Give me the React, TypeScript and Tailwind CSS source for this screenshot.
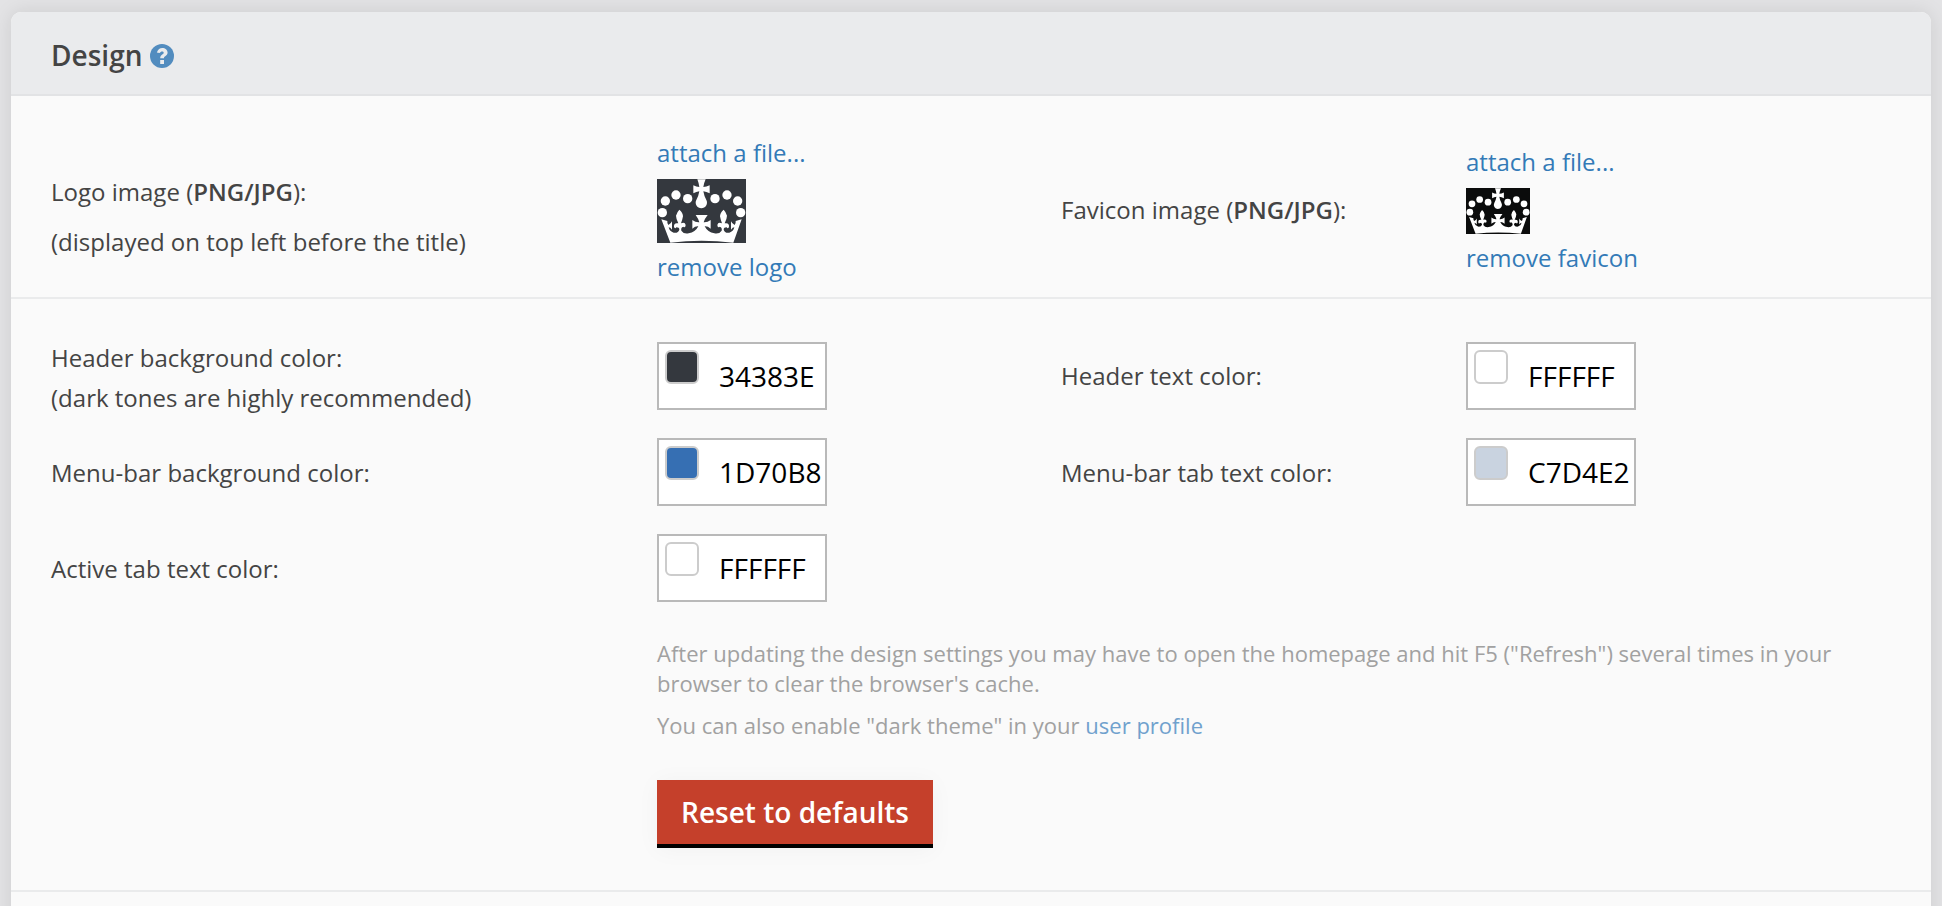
import type { ReactNode } from "react";

function Crown({ className, bg }: { className: string; bg: string }) {
  return (
    <svg viewBox="0 0 267 192" preserveAspectRatio="none" className={className} aria-hidden="true">
      <rect width="267" height="192" fill={bg} />
      <g fill="#fff">
        <circle cx="16" cy="101" r="14" />
        <circle cx="25" cy="66" r="14" />
        <circle cx="57" cy="48" r="14" />
        <circle cx="92" cy="59" r="14" />
        <circle cx="174" cy="59" r="14" />
        <circle cx="210" cy="48" r="14" />
        <circle cx="242" cy="66" r="14" />
        <circle cx="251" cy="101" r="14" />
        <path d="M121 1H146Q140 14 139 24Q148 24 158 19V43Q148 38 139 37Q141 50 148 63A17 17 0 1 1 118 63Q125 50 127 37Q118 38 109 43V19Q118 24 127 24Q126 14 121 1Z" />
        <path d="M13 121L31 126Q30 133 34 138Q42 134 45 127V152Q40 145 35 145Q38 158 50 161Q64 163 67 152Q67 145 58 145Q54 152 51 143Q50 130 64 133Q57 118 57 110Q60 99 67 92Q78 101 78 112Q76 123 72 133Q84 128 86 138Q85 148 79 143Q71 145 73 155Q80 166 95 163Q115 160 124 142Q115 141 106 149V123Q116 131 127 130Q124 119 116 108H152Q143 119 140 130Q151 131 161 123V149Q152 141 143 142Q152 160 172 163Q187 166 194 155Q196 145 188 143Q182 148 181 138Q183 128 195 133Q191 123 189 112Q189 101 200 92Q207 99 210 110Q210 118 203 133Q217 130 216 143Q213 152 209 145Q200 145 200 152Q203 163 217 161Q229 158 232 145Q227 145 222 152V127Q225 134 233 138Q237 133 236 126L254 121L229 191Q133 180 40 191Z" />
      </g>
    </svg>
  );
}

function FileLink({ children }: { children: ReactNode }) {
  return <a href="#" className="block text-[#337ab7]">{children}</a>;
}

function ColorField({ value, swatch }: { value: string; swatch: string }) {
  return (
    <div className="flex h-[68px] w-[170px] gap-5 border-2 border-[#b9b9b9] bg-white pt-1.5 pl-1.5">
      <span className={`size-[34px] shrink-0 rounded-[6px] border-2 border-[#ccc] ${swatch}`} />
      <span className="pt-1.5 text-[28px] leading-[40px] whitespace-nowrap text-black">{value}</span>
    </div>
  );
}

const COLS = "grid grid-cols-[606px_404px_405px_1fr] items-center pl-10";

export default function App() {
  return (
    <div className="h-[906px] overflow-hidden bg-[#e3e3e5] px-[11px] pt-3 font-['Open_Sans',sans-serif] text-[24px] leading-[40px] tracking-[0.01px] text-[#444]">
      <section className="h-[1000px] rounded-t-[10px] bg-[#fafafa] shadow-[0_0_20px_rgba(0,0,0,0.1)]">
        <header className="flex h-[84px] items-center gap-2 rounded-t-[10px] border-b-2 border-[#e2e3e5] bg-[#eaebed] pt-1 pl-10">
          <h2 className="text-[28px] leading-[40px] font-semibold">Design</h2>
          <svg viewBox="0 0 24 24" className="mt-0.5 size-6" aria-hidden="true">
            <circle cx="12" cy="12" r="12" fill="#528cbf" />
            <path d="M6.8 8.4Q8.6 4 12.3 4C15.2 4 17.6 5.9 17.6 8.6C17.6 10.5 16.5 11.5 15.2 12.3C14.2 12.9 14 13.3 14 14.2H10.2C10.2 12.1 10.9 11.2 12.3 10.4C13.2 9.9 13.7 9.5 13.7 8.7C13.7 7.9 13 7.4 12.1 7.4C11 7.4 10.4 8 9.5 9.1ZM10.2 16H14V19.9H10.2Z" fill="#eaebed" />
          </svg>
        </header>

        <div className={`${COLS} h-[203px] border-b-2 border-[#eaebec] pt-[27px]`}>
          <div className="pt-3.5 leading-[50px]">
            <p>Logo image (<b className="font-semibold">PNG/JPG</b>):</p>
            <p>(displayed on top left before the title)</p>
          </div>
          <div>
            <FileLink>attach a file...</FileLink>
            <Crown className="mt-1.5 mb-1 h-16 w-[89px]" bg="#34383e" />
            <FileLink>remove logo</FileLink>
          </div>
          <p>Favicon image (<b className="font-semibold">PNG/JPG</b>):</p>
          <div>
            <FileLink>attach a file...</FileLink>
            <Crown className="mt-1.5 mb-1 h-[46px] w-16" bg="#0b0c0c" />
            <FileLink>remove favicon</FileLink>
          </div>
        </div>

        <div className="h-[593px] border-b-2 border-[#eaebec] pt-[29px]">
          <div className={`${COLS} h-24`}>
            <p className="pt-1">Header background color:<br />(dark tones are highly recommended)</p>
            <ColorField value="34383E" swatch="bg-[#34383e]" />
            <p>Header text color:</p>
            <ColorField value="FFFFFF" swatch="bg-white" />
          </div>
          <div className={`${COLS} h-24`}>
            <p className="pt-0.5">Menu-bar background color:</p>
            <ColorField value="1D70B8" swatch="bg-[#366fb3]" />
            <p className="pt-0.5">Menu-bar tab text color:</p>
            <ColorField value="C7D4E2" swatch="bg-[#c9d3e0]" />
          </div>
          <div className={`${COLS} h-24`}>
            <p className="pt-0.5">Active tab text color:</p>
            <ColorField value="FFFFFF" swatch="bg-white" />
          </div>
          <div className="pt-[22px] pr-10 pl-[646px] text-[22px] leading-[30px] text-[#a1a1a1]">
            <p>
              After updating the design settings you may have to open the homepage and hit F5 ("Refresh") several times in your
              <br />
              browser to clear the browser's cache.
            </p>
            <p className="mt-3">
              You can also enable "dark theme" in your <a href="#" className="text-[#70a1cd]">user profile</a>
            </p>
            <button className="mt-10 block h-[68px] w-[276px] border-b-4 border-black bg-[#c5402b] text-[28px] leading-[40px] font-semibold whitespace-nowrap text-white shadow-[0_2px_24px_rgba(0,0,0,0.04)]">
              Reset to defaults
            </button>
          </div>
        </div>
      </section>
    </div>
  );
}
